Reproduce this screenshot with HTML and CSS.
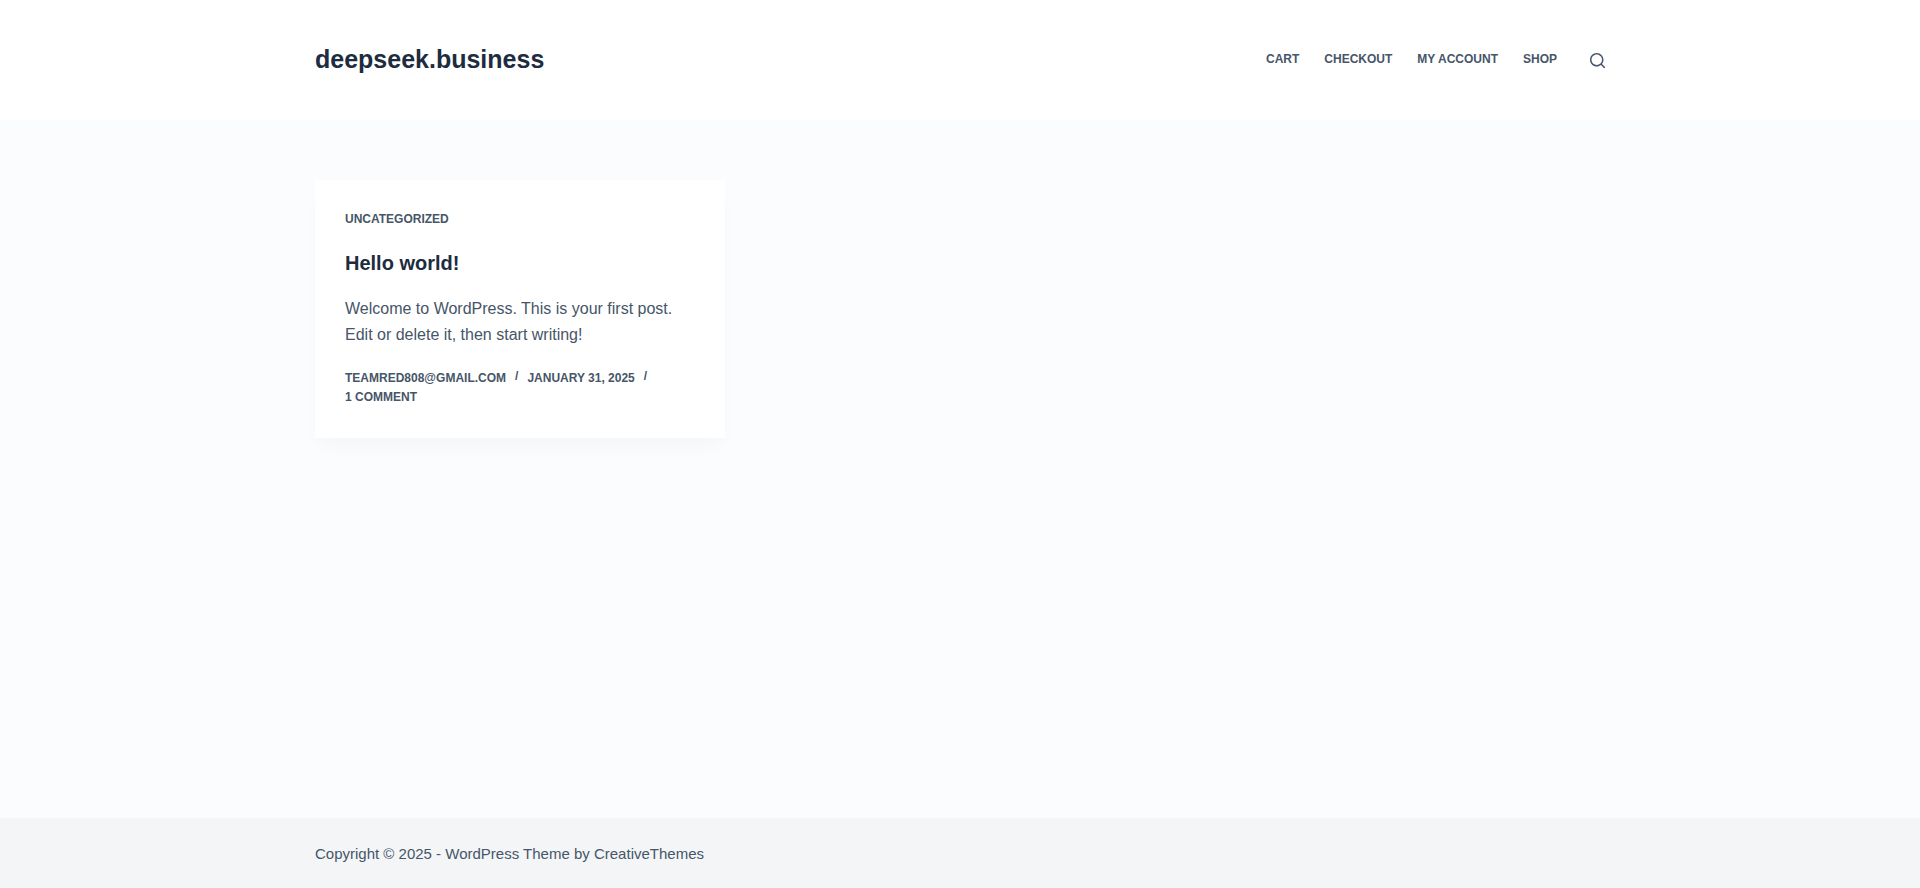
FILE: index.html
```html
<!DOCTYPE html>
<html lang="en">
<head>
<meta charset="utf-8">
<title>deepseek.business</title>
<link rel="stylesheet" href="styles.css">
</head>
<body>
<div class="page">
  <header class="site-header">
    <div class="container header-row">
      <a class="site-title" href="#">deepseek.business</a>
      <div class="header-end">
        <nav class="nav">
          <a href="#">Cart</a>
          <a href="#">Checkout</a>
          <a href="#">My account</a>
          <a href="#">Shop</a>
        </nav>
        <button class="search" aria-label="Search">
          <svg width="15" height="15" viewBox="0 0 15 15" fill="currentColor"><path d="M14.8,13.7L12,11c.9-1.2,1.5-2.6,1.5-4.2c0-3.7-3-6.8-6.8-6.8S0,3,0,6.8s3,6.8,6.8,6.8c1.6,0,3.1-.6,4.2-1.5l2.8,2.8c.1.1.3.2.5.2s.4-.1.5-.2C15.1,14.5,15.1,14,14.8,13.7zM1.5,6.8c0-2.9,2.4-5.2,5.2-5.2S12,3.9,12,6.8S9.6,12,6.8,12S1.5,9.6,1.5,6.8z"/></svg>
        </button>
      </div>
    </div>
  </header>
  <main class="main">
    <div class="container">
      <article class="card">
        <a class="meta-link category" href="#">Uncategorized</a>
        <h2 class="card-title">Hello world!</h2>
        <p class="excerpt">Welcome to WordPress. This is your first post. Edit or delete it, then start writing!</p>
        <ul class="meta">
          <li>teamred808@gmail.com</li>
          <li>January 31, 2025</li>
          <li>1 Comment</li>
        </ul>
      </article>
    </div>
  </main>
  <footer class="site-footer">
    <div class="container">Copyright © 2025 - WordPress Theme by CreativeThemes</div>
  </footer>
</div>
</body>
</html>
```
FILE: styles.css
```css
* { box-sizing: border-box; }
html, body { margin: 0; padding: 0; height: 100%; }
body {
  font-family: "Liberation Sans", Arial, sans-serif;
  font-size: 16px;
  line-height: 1.65;
  color: #465568;
  background: #fbfcfd;
}
a { color: inherit; text-decoration: none; }
.page { min-height: 888px; display: flex; flex-direction: column; }
.container { width: 1290px; margin: 0 auto; }
.site-header { height: 120px; background: #fff; flex: none; }
.header-row { height: 100%; display: flex; align-items: center; justify-content: space-between; }
.site-title { font-size: 25px; font-weight: 700; line-height: 1.5; color: #1d2c3f; }
.header-end { display: flex; align-items: center; }
.nav { display: flex; gap: 25px; }
.nav a { font-size: 12px; font-weight: 700; text-transform: uppercase; line-height: 1.3; }
.search { display: flex; margin: 0 0 0 33px; padding: 0; border: 0; background: none; color: #465568; }
.main { flex: 1; padding-top: 60px; }
.card {
  width: 410px;
  height: 258px;
  padding: 30px;
  background: #fff;
  box-shadow: 0 12px 18px -6px rgba(34, 56, 101, 0.04);
}
.meta-link, .meta { font-size: 12px; font-weight: 700; text-transform: uppercase; }
.category { display: block; line-height: 16px; margin-top: 1px; }
.card-title { margin: 21px 0 0; font-size: 20px; font-weight: 700; line-height: 1.5; color: #1d2c3f; }
.excerpt { margin: 18px 0 0; }
.meta { list-style: none; margin: 20px 0 0; padding: 0; display: flex; flex-wrap: wrap; line-height: 19px; }
.meta li { display: flex; }
.meta li:not(:last-child)::after {
  content: "/";
  margin: 0 9px;
  font-size: 12px;
  line-height: 15px;
}
.site-footer { height: 70px; flex: none; padding-top: 2px; background: #f3f5f7; font-size: 15px; display: flex; align-items: center; }
```
